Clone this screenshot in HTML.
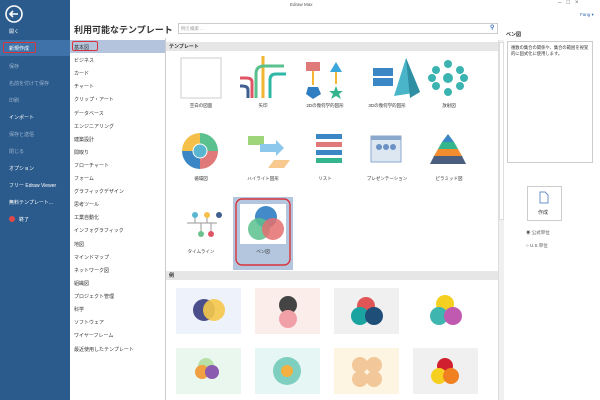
<!DOCTYPE html><html><head><meta charset="utf-8"><style>
*{margin:0;padding:0;box-sizing:border-box}
body{width:600px;height:400px;overflow:hidden;background:#fff;font-family:"Liberation Sans","Noto Sans CJK JP",sans-serif;position:relative;font-size:5px;color:#333}
.a{position:absolute;white-space:nowrap}
#sb{position:absolute;left:0;top:0;width:70px;height:400px;background:#2b5b8c}
.si{position:absolute;left:9px;color:#fff;font-size:5px}
.si.d{color:#9db4cf}
.ci{position:absolute;left:74px;font-size:5px;color:#333}
.lbl{position:absolute;font-size:4.5px;color:#333;text-align:center;width:60px}
.ex{position:absolute;width:65px;height:46px}
</style></head><body>
<div id="sb">
<svg class="a" style="left:4px;top:4px" width="20" height="20"><circle cx="10" cy="10" r="8" fill="none" stroke="#fff" stroke-width="1.6"/><path d="M14 10H6M9 7L6 10L9 13" stroke="#fff" stroke-width="1.6" fill="none"/></svg>
<div class="si" style="top:28px">開く</div>
<div class="a" style="left:0;top:40px;width:70px;height:16px;background:#3f72a8"></div>
<div class="a" style="left:3px;top:42px;width:33px;height:11px;border:1.2px solid #d9343c;border-radius:2px"></div>
<div class="si" style="top:45px">新規作成</div>
<div class="si d" style="top:63px">保存</div>
<div class="si d" style="top:80px">名前を付けて保存</div>
<div class="si d" style="top:97px">印刷</div>
<div class="si" style="top:114px">インポート</div>
<div class="si d" style="top:131px">保存と送信</div>
<div class="si d" style="top:148px">閉じる</div>
<div class="si" style="top:165px">オプション</div>
<div class="si" style="top:182px">フリー Edraw Viewer</div>
<div class="si" style="top:199px">無料テンプレート...</div>
<div class="a" style="left:9px;top:216px;width:6px;height:6px;border-radius:50%;background:#e04848"></div>
<div class="si" style="top:216px;left:19px">終了</div>
</div>
<div class="a" style="left:290px;top:2px;font-size:4.5px;color:#555">Edraw Max</div>
<div class="a" style="left:558px;top:0px;font-size:6px;color:#666">–&nbsp;&nbsp;&nbsp;□&nbsp;&nbsp;&nbsp;×</div>
<div class="a" style="left:580px;top:12px;font-size:4.5px;color:#3a6fb8">Fang ▾</div>
<div class="a" style="left:74px;top:23px;font-size:9px;font-weight:bold;color:#333">利用可能なテンプレート</div>
<div class="a" style="left:178px;top:23px;width:320px;height:11px;border:1px solid #ccc"></div>
<div class="a" style="left:181px;top:26px;font-size:4.5px;color:#999">例え検索 ...</div>
<div class="a" style="left:490px;top:24px;font-size:6px;color:#3a6fb8;font-weight:bold">⚲</div>
<div class="a" style="left:70px;top:40px;width:95px;height:13px;background:#b3c4dc"></div>
<div class="a" style="left:72px;top:41px;width:26px;height:10px;border:1.2px solid #d9343c;border-radius:2px"></div>
<div class="ci" style="top:44px">基本図</div>
<div class="ci" style="top:57px">ビジネス</div>
<div class="ci" style="top:70px">カード</div>
<div class="ci" style="top:83px">チャート</div>
<div class="ci" style="top:96px">クリップ・アート</div>
<div class="ci" style="top:110px">データベース</div>
<div class="ci" style="top:123px">エンジニアリング</div>
<div class="ci" style="top:136px">建築設計</div>
<div class="ci" style="top:149px">間取り</div>
<div class="ci" style="top:162px">フローチャート</div>
<div class="ci" style="top:175px">フォーム</div>
<div class="ci" style="top:188px">グラフィックデザイン</div>
<div class="ci" style="top:201px">思考ツール</div>
<div class="ci" style="top:214px">工業自動化</div>
<div class="ci" style="top:227px">インフォグラフィック</div>
<div class="ci" style="top:241px">地図</div>
<div class="ci" style="top:254px">マインドマップ</div>
<div class="ci" style="top:267px">ネットワーク図</div>
<div class="ci" style="top:280px">組織図</div>
<div class="ci" style="top:293px">プロジェクト管理</div>
<div class="ci" style="top:306px">科学</div>
<div class="ci" style="top:319px">ソフトウェア</div>
<div class="ci" style="top:332px">ワイヤーフレーム</div>
<div class="ci" style="top:346px">最近使用したテンプレート</div>
<div class="a" style="left:165px;top:38px;width:1px;height:362px;background:#ccc"></div>
<div class="a" style="left:166px;top:42px;width:332px;height:9px;background:#e6e6e6"></div>
<div class="a" style="left:169px;top:43px;font-size:5px;font-weight:bold">テンプレート</div>
<div class="a" style="left:498px;top:40px;width:6px;height:360px;background:#f0f0f0;border-left:1px solid #ddd"></div>
<div class="a" style="left:499px;top:42px;width:5px;height:178px;background:#fff;border:1px solid #ddd"></div>
<div class="a" style="left:233px;top:197px;width:60px;height:73px;background:#b3c6dd"></div>
<svg class="a" style="left:166px;top:52px" width="332" height="220">
<rect x="15" y="6" width="40" height="40" fill="#fff" stroke="#ccc"/>
<g stroke-width="3" fill="none"><path d="M97 46V4" stroke="#f2b632"/><path d="M90 46V22Q90 14 98 14H118" stroke="#5ac18e"/><path d="M104 46V28Q104 22 110 22H120" stroke="#2eb8a6"/><path d="M86 46V30Q86 26 80 26H74" stroke="#e05565"/><path d="M82 46V38Q82 34 76 34H74" stroke="#3f5f8f"/></g>
<rect x="140" y="10" width="14" height="9" fill="#e07a7a"/><path d="M147 19V33" stroke="#f2b632" stroke-width="2"/><polygon points="142,35 152,35 155,42 147,47 140,42" fill="#2f7ec2"/><polygon points="170,10 176,20 164,20" fill="#3aa6d9"/><path d="M170 20V32" stroke="#f2b632" stroke-width="2"/><polygon points="170,34 172,39 177,39 173,42 175,47 170,44 165,47 167,42 163,39 168,39" fill="#35b58e"/>
<rect x="207" y="16" width="20" height="8" fill="#3b86c4"/><rect x="207" y="26" width="20" height="8" fill="#3b86c4"/><polygon points="228,44 240,6 254,40" fill="#4ab5c9"/><polygon points="240,6 254,40 244,46" fill="#2e8ea2"/>
<g fill="#3bb3b0"><circle cx="282" cy="26" r="5"/><circle cx="282" cy="12" r="4"/><circle cx="282" cy="40" r="4"/><circle cx="270" cy="18" r="4"/><circle cx="294" cy="18" r="4"/><circle cx="270" cy="34" r="4"/><circle cx="294" cy="34" r="4"/><circle cx="266" cy="26" r="4"/><circle cx="298" cy="26" r="4"/></g>
<path d="M34 99L34 81A18 18 0 0 1 52 99Z" fill="#5ac18e"/><path d="M34 99L52 99A18 18 0 0 1 34 117Z" fill="#e07a7a"/><path d="M34 99L34 117A18 18 0 0 1 16 99Z" fill="#3b86c4"/><path d="M34 99L16 99A18 18 0 0 1 34 81Z" fill="#f5c04a"/><circle cx="34" cy="99" r="7" fill="#5ab5cf" stroke="#fff"/>
<rect x="82" y="84" width="16" height="9" fill="#9fd57a"/><path d="M94 92H110V88L118 96L110 104V100H94Z" fill="#8cc8ec"/><polygon points="108,108 124,108 118,116 102,116" fill="#f7c98e"/>
<rect x="150" y="82" width="26" height="5" fill="#3b86c4"/><rect x="150" y="90" width="26" height="5" fill="#e07a7a"/><rect x="150" y="98" width="26" height="5" fill="#3b86c4"/><rect x="150" y="106" width="26" height="5" fill="#35b58e"/>
<rect x="205" y="84" width="30" height="26" fill="#dde7f2" stroke="#8aa9cc"/><rect x="205" y="84" width="30" height="4" fill="#8aa9cc"/><circle cx="213" cy="95" r="3" fill="#6a92c4"/><circle cx="220" cy="95" r="3" fill="#6a92c4"/><circle cx="227" cy="95" r="3" fill="#6a92c4"/>
<polygon points="282,82 288,90 276,90" fill="#3b86c4"/><polygon points="276,90 288,90 292,97 272,97" fill="#35b58e"/><polygon points="272,97 292,97 296,104 268,104" fill="#f28c30"/><polygon points="268,104 296,104 300,112 264,112" fill="#4a5f80"/>
<path d="M21 171H51" stroke="#999"/><path d="M29 163V171M41 163V171M35 171V180M45 171V180" stroke="#999"/><circle cx="29" cy="163" r="3" fill="#5ab5cf"/><circle cx="41" cy="163" r="3" fill="#f5c04a"/><circle cx="53" cy="163" r="3" fill="#3f5f8f"/><circle cx="35" cy="182" r="3" fill="#6cc28c"/><circle cx="45" cy="182" r="3" fill="#e05565"/>
<rect x="74" y="152" width="46" height="40" fill="#fff"/>
<circle cx="100" cy="165" r="11" fill="#2f7ec2" opacity=".9"/><circle cx="93" cy="177" r="11" fill="#5ac18e" opacity=".85"/><circle cx="107" cy="177" r="11" fill="#e46f6f" opacity=".85"/>
<rect x="70" y="147" width="54" height="66" rx="6" fill="none" stroke="#d9343c" stroke-width="1.4"/>
</svg>
<div class="lbl" style="left:171px;top:103px">空白の図面</div>
<div class="lbl" style="left:233px;top:103px">矢印</div>
<div class="lbl" style="left:295px;top:103px">2Dの幾何学的図形</div>
<div class="lbl" style="left:357px;top:103px">3Dの幾何学的図形</div>
<div class="lbl" style="left:419px;top:103px">放射図</div>
<div class="lbl" style="left:171px;top:176px">循環図</div>
<div class="lbl" style="left:233px;top:176px">ハイライト図形</div>
<div class="lbl" style="left:295px;top:176px">リスト</div>
<div class="lbl" style="left:357px;top:176px">プレゼンテーション</div>
<div class="lbl" style="left:419px;top:176px">ピラミッド図</div>
<div class="lbl" style="left:171px;top:249px">タイムライン</div>
<div class="lbl" style="left:233px;top:249px">ベン図</div>
<div class="a" style="left:166px;top:271px;width:332px;height:9px;background:#e6e6e6"></div>
<div class="a" style="left:169px;top:272px;font-size:5px;font-weight:bold">例</div>
<div class="ex" style="left:176px;top:288px;background:#eef2fb"><svg width="65" height="46"><circle cx="28" cy="22" r="11" fill="#4a4f8c"/><circle cx="38" cy="22" r="11" fill="#f5c84a" opacity=".9"/></svg></div>
<div class="ex" style="left:255px;top:288px;background:#fbeeea"><svg width="65" height="46"><circle cx="33" cy="17" r="9" fill="#444"/><circle cx="33" cy="31" r="9" fill="#f2a0a8"/></svg></div>
<div class="ex" style="left:334px;top:288px;background:#f0f0f0"><svg width="65" height="46"><circle cx="32" cy="18" r="9" fill="#e05555"/><circle cx="26" cy="28" r="9" fill="#1aa3a0"/><circle cx="40" cy="28" r="9" fill="#1f4f78"/></svg></div>
<div class="ex" style="left:413px;top:288px;background:#fff"><svg width="65" height="46"><circle cx="32" cy="16" r="9" fill="#f5d020"/><circle cx="26" cy="28" r="9" fill="#3fb5b0"/><circle cx="40" cy="28" r="9" fill="#c05ab0"/></svg></div>
<div class="ex" style="left:176px;top:348px;background:#eaf7ef"><svg width="65" height="46"><circle cx="30" cy="18" r="8" fill="#b9e0a8"/><circle cx="26" cy="24" r="7" fill="#f0a040"/><circle cx="36" cy="24" r="7" fill="#8a5ab0"/></svg></div>
<div class="ex" style="left:255px;top:348px;background:#e6f6f5"><svg width="65" height="46"><circle cx="32" cy="23" r="14" fill="#7fcfc0"/><circle cx="32" cy="23" r="6" fill="#f5b042"/></svg></div>
<div class="ex" style="left:334px;top:348px;background:#fdf4e2"><svg width="65" height="46"><circle cx="26" cy="17" r="8" fill="#f2c89a"/><circle cx="40" cy="17" r="8" fill="#f2c89a"/><circle cx="26" cy="31" r="8" fill="#f2c89a"/><circle cx="40" cy="31" r="8" fill="#f2c89a"/></svg></div>
<div class="ex" style="left:413px;top:348px;background:#f0f0f0"><svg width="65" height="46"><circle cx="32" cy="18" r="8" fill="#d02030"/><circle cx="26" cy="28" r="8" fill="#f5d020"/><circle cx="38" cy="28" r="8" fill="#f08020"/></svg></div>
<div class="a" style="left:506px;top:31px;font-size:5px;font-weight:bold">ベン図</div>
<div class="a" style="left:507px;top:41px;width:86px;height:122px;border:1px solid #ccc;padding:3px;font-size:4.3px;white-space:normal;line-height:6px">複数の集合の関係や、集合の範囲を視覚的に図式化に使用します。</div>
<div class="a" style="left:527px;top:186px;width:35px;height:35px;border:1px solid #ccc"></div>
<svg class="a" style="left:539px;top:191px" width="10" height="13"><path d="M1 1H6L9 4V12H1Z" fill="#fff" stroke="#6a92c4"/></svg>
<div class="a" style="left:538px;top:209px;font-size:5px">作成</div>
<div class="a" style="left:526px;top:230px;font-size:4.5px;color:#555">◉ 公式単位</div>
<div class="a" style="left:526px;top:243px;font-size:4.5px;color:#555">○ U.S.単位</div>
</body></html>
